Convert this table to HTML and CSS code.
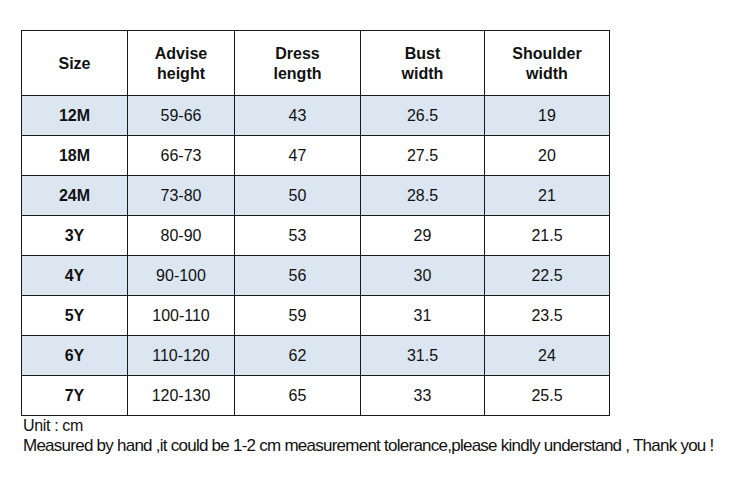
FILE: index.html
```html
<!DOCTYPE html>
<html>
<head>
<meta charset="utf-8">
<link rel="stylesheet" href="styles.css">
</head>
<body>
<div class="page">
  <table class="size-table">
    <colgroup>
      <col class="c1"><col class="c2"><col class="c3"><col class="c4"><col class="c5">
    </colgroup>
    <thead>
      <tr>
        <th>Size</th>
        <th>Advise<br>height</th>
        <th>Dress<br>length</th>
        <th>Bust<br>width</th>
        <th>Shoulder<br>width</th>
      </tr>
    </thead>
    <tbody>
      <tr class="shade"><td class="sz">12M</td><td>59-66</td><td>43</td><td>26.5</td><td>19</td></tr>
      <tr><td class="sz">18M</td><td>66-73</td><td>47</td><td>27.5</td><td>20</td></tr>
      <tr class="shade"><td class="sz">24M</td><td>73-80</td><td>50</td><td>28.5</td><td>21</td></tr>
      <tr><td class="sz">3Y</td><td>80-90</td><td>53</td><td>29</td><td>21.5</td></tr>
      <tr class="shade"><td class="sz">4Y</td><td>90-100</td><td>56</td><td>30</td><td>22.5</td></tr>
      <tr><td class="sz">5Y</td><td>100-110</td><td>59</td><td>31</td><td>23.5</td></tr>
      <tr class="shade"><td class="sz">6Y</td><td>110-120</td><td>62</td><td>31.5</td><td>24</td></tr>
      <tr><td class="sz">7Y</td><td>120-130</td><td>65</td><td>33</td><td>25.5</td></tr>
    </tbody>
  </table>
  <div class="notes">
    <div class="note unit">Unit : cm</div>
    <div class="note long">Measured by hand ,it could be 1-2 cm measurement tolerance,please kindly understand , Thank you !</div>
  </div>
</div>
</body>
</html>
```
FILE: styles.css
```css
html, body {
  margin: 0;
  padding: 0;
  background: #ffffff;
}
body {
  font-family: "Liberation Sans", Arial, sans-serif;
  color: #111111;
}
.page {
  padding: 30px 0 0 21px;
}
.size-table {
  border-collapse: collapse;
  table-layout: fixed;
  width: 588px;
}
.c1 { width: 106px; }
.c2 { width: 107px; }
.c3 { width: 126px; }
.c4 { width: 124px; }
.c5 { width: 125px; }
.size-table th,
.size-table td {
  border: 1px solid #1a1a1a;
  text-align: center;
  vertical-align: middle;
  padding: 1px 0 0 0;
  font-size: 16px;
}
.size-table th {
  height: 63px;
  font-weight: bold;
  line-height: 20px;
}
.size-table td {
  height: 38px;
  line-height: 20px;
}
.size-table td.sz {
  font-weight: bold;
}
.shade td {
  background: #dce6f1;
}
.notes {
  padding-left: 2px;
}
.note {
  line-height: 20px;
}
.unit {
  font-size: 16px;
  letter-spacing: -0.35px;
}
.long {
  font-size: 17px;
  letter-spacing: -0.75px;
}
```
